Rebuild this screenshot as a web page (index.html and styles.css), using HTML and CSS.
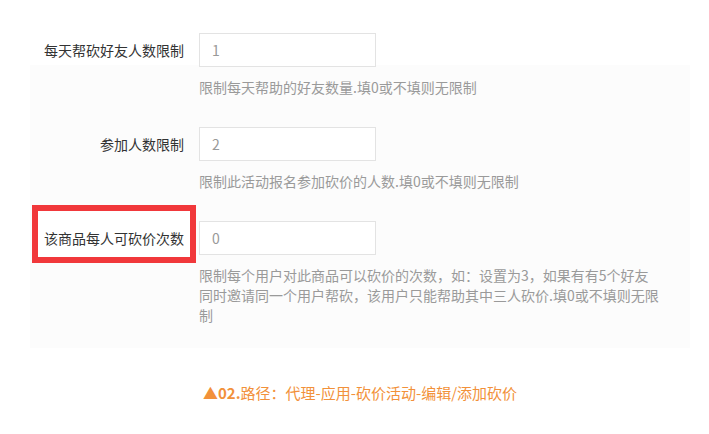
FILE: index.html
```html
<!DOCTYPE html>
<html lang="zh-CN">
<head>
<meta charset="utf-8">
<title>砍价设置</title>
<link rel="stylesheet" href="styles.css">
</head>
<body>
<div class="page">
  <div class="form">
    <div class="row">
      <label class="label">每天帮砍好友人数限制</label>
      <input class="field" type="text" value="1" readonly>
      <p class="help">限制每天帮助的好友数量.填0或不填则无限制</p>
    </div>
    <div class="row">
      <label class="label">参加人数限制</label>
      <input class="field" type="text" value="2" readonly>
      <p class="help">限制此活动报名参加砍价的人数.填0或不填则无限制</p>
    </div>
    <div class="row">
      <label class="label highlight">该商品每人可砍价次数</label>
      <input class="field" type="text" value="0" readonly>
      <p class="help">限制每个用户对此商品可以砍价的次数，如：设置为3，如果有有5个好友同时邀请同一个用户帮砍，该用户只能帮助其中三人砍价.填0或不填则无限制</p>
    </div>
  </div>
  <p class="caption"><b>▲02.</b>路径：代理-应用-砍价活动-编辑/添加砍价</p>
</div>
</body>
</html>
```
FILE: styles.css
```css
html, body {
  margin: 0;
  padding: 0;
  background: #fff;
}
body {
  font-family: "Noto Sans CJK SC", "Noto Sans", sans-serif;
  font-size: 14px;
  color: #333;
}
.page {
  padding-top: 33px;
}
.form {
  margin-left: 30px;
  width: 660px;
  padding-bottom: 23px;
  background: linear-gradient(to bottom, #fff 0, #fff 32px, #fcfcfc 32px);
}
.row {
  display: grid;
  grid-template-columns: 166px 1fr;
  column-gap: 3px;
  align-items: start;
  margin-bottom: 30px;
}
.row:last-child {
  margin-bottom: 0;
}
.label {
  grid-column: 1;
  grid-row: 1;
  justify-self: end;
  line-height: 34px;
  padding-right: 12px;
  color: #333;
  white-space: nowrap;
}
.label.highlight {
  border: 6px solid #f1383b;
  padding: 10px 6px 2px 6px;
  margin: -16px 0 -8px 0;
  background: #fff;
}
.field {
  grid-column: 2;
  grid-row: 1;
  box-sizing: border-box;
  width: 177px;
  height: 34px;
  margin: 0;
  border: 1px solid #e3e3e3;
  background: #fff;
  padding: 0 12px;
  font-family: inherit;
  font-size: 14px;
  color: #999;
  outline: none;
}
.help {
  grid-column: 2;
  grid-row: 2;
  margin: 10px 0 0 0;
  width: 461px;
  line-height: 20px;
  color: #9a9a9a;
}
.caption {
  margin: 35px 0 0 30px;
  width: 660px;
  text-align: center;
  line-height: 20px;
  font-size: 15px;
  color: #f2913a;
}
.caption b {
  font-weight: 700;
}
```
